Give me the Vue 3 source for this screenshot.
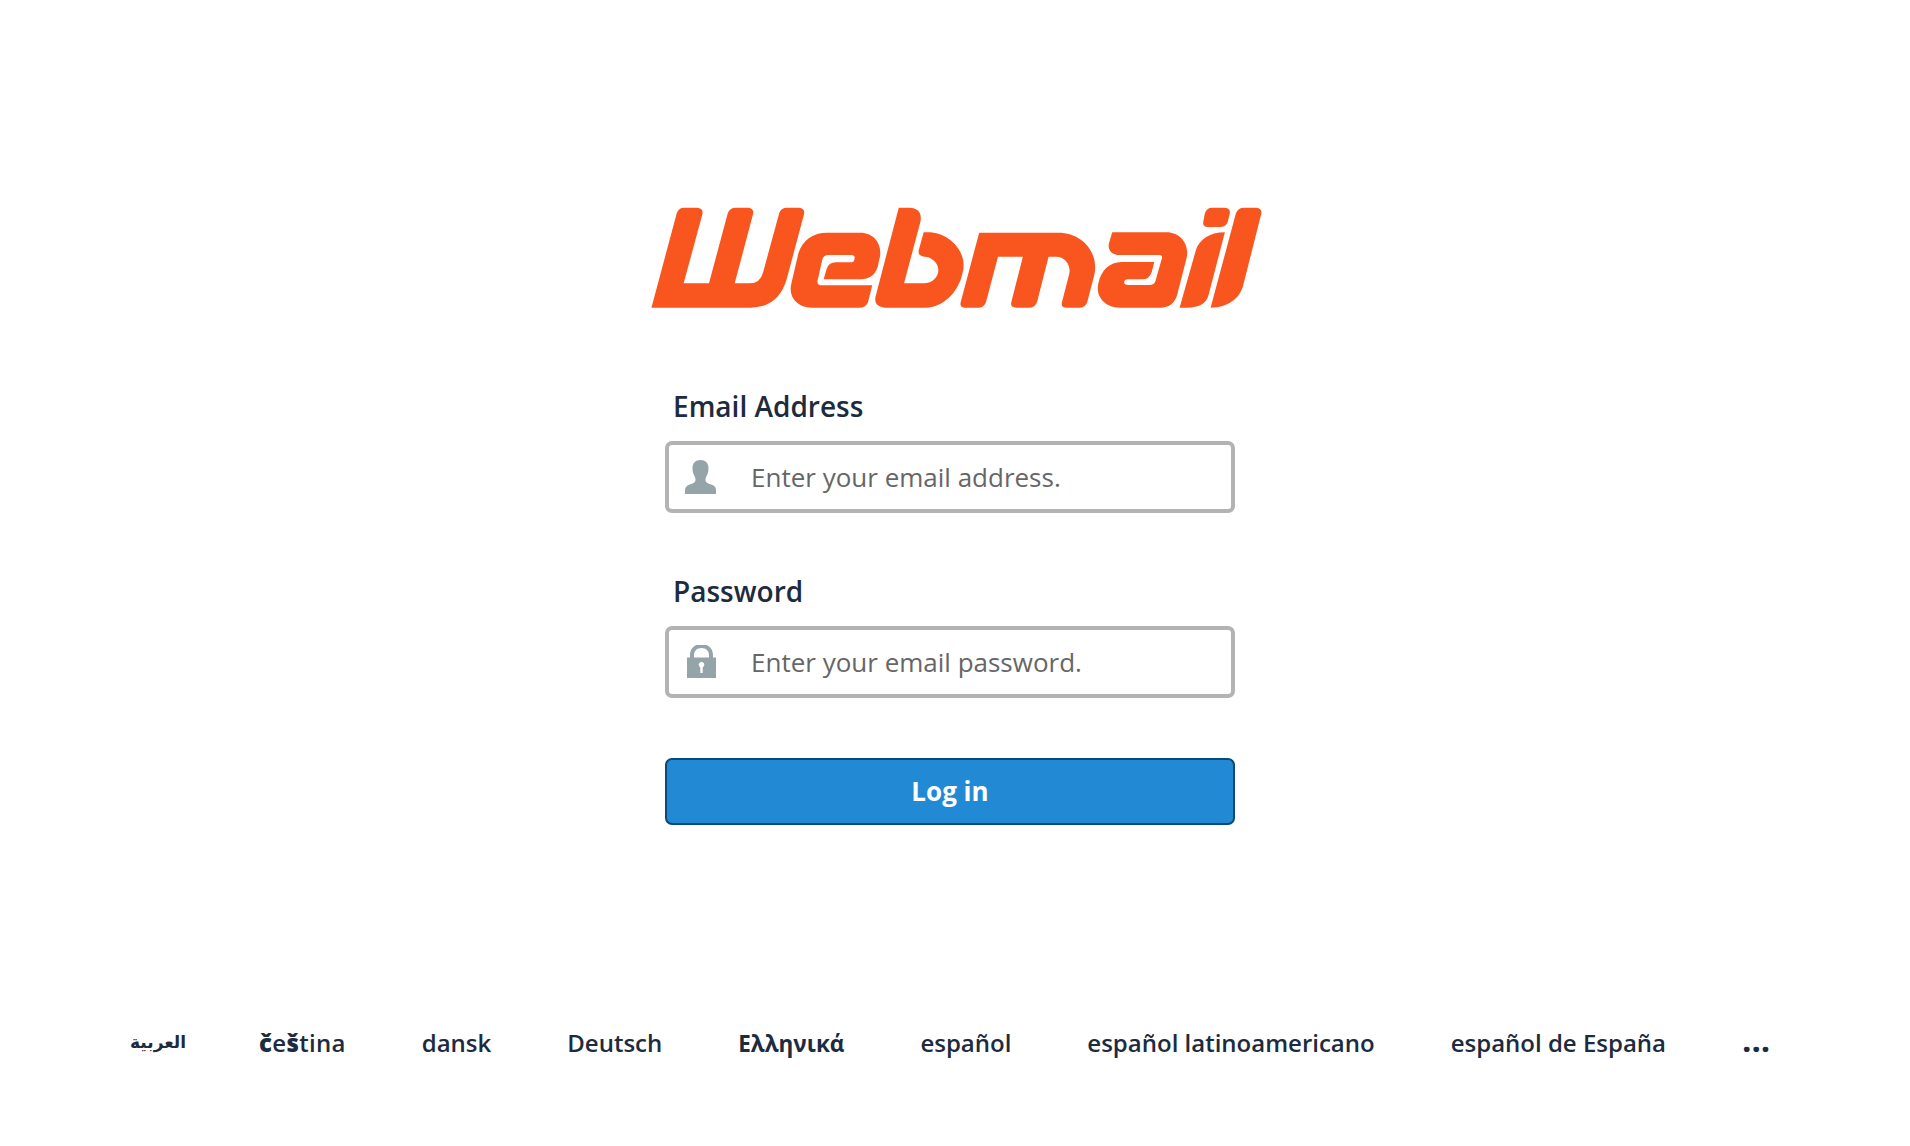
<template>
  <div class="login-page">
    <svg class="logo" viewBox="0 0 1568 390" preserveAspectRatio="none" role="img" aria-label="Webmail">
      <path d="M28 353 L90 70 Q94 53 108 53 L140 53 Q156 55 153 72 L107 280 L169 280 L215 70 Q219 53 235 53 L265 53 Q280 55 277 72 L232 280 L268 280 Q295 280 302 245 L341 70 Q345 53 360 53 L390 53 Q405 55 402 72 L360 265 Q340 353 270 353 Z" />
      <path d="M458 128 L540 128 C575 128 595 165 587 205 L582 232 Q572 268 540 268 L450 268 L457 238 Q462 217 480 217 L518 217 Q524 217 525 210 L526 203 Q526 195 518 195 L462 195 Q450 195 447 207 L435 272 Q433 286 445 286 L569 286 L559 335 Q555 353 535 353 L420 353 C385 353 362 320 371 280 L388 190 C398 150 425 128 458 128 Z" />
      <path d="M634 53 L660 53 Q693 55 687 95 L647 280 L695 280 C720 280 735 255 730 232 C727 215 712 200 697 200 Q680 198 683 180 L695 127 L705 127 C760 127 805 190 790 250 C780 310 740 353 700 353 L600 353 Q572 350 577 320 Z" />
      <path d="M831 128 L1025 128 C1085 128 1125 190 1113 255 L1096 335 Q1092 353 1075 353 L1045 353 Q1030 353 1034 335 L1051 255 C1058 225 1040 200 1020 200 L1001 200 L973 335 Q969 353 952 353 L922 353 Q906 353 910 335 L938 200 L877 200 L848 335 Q844 353 827 353 L797 353 Q782 353 786 335 Z" />
      <path d="M1157 127 L1290 127 C1325 127 1347 165 1339 205 L1316 315 Q1306 353 1275 353 L1175 353 C1140 353 1115 320 1123 280 C1130 240 1150 217 1180 216 L1260 216 L1254 245 Q1248 268 1230 268 L1197 268 Q1186 268 1186 277 Q1186 285 1197 285 L1248 285 Q1260 285 1263 272 L1279 203 Q1280 195 1272 195 L1175 195 C1155 195 1145 178 1149 160 Z" />
      <path d="M1384 70 Q1388 53 1402 53 L1432 53 Q1448 55 1445 70 L1440 95 Q1436 111 1420 111 L1392 111 Q1377 110 1380 95 Z" />
      <path d="M1322 353 L1362 180 C1370 150 1395 127 1433 127 L1393 315 Q1385 353 1340 353 Z" />
      <path d="M1460 70 Q1465 53 1480 53 L1510 53 Q1525 55 1522 72 L1478 285 C1470 325 1440 353 1398 353 Z" />
    </svg>

    <form class="login-form" @submit.prevent>
      <label class="field-label" for="user">Email Address</label>
      <div class="input-box">
        <svg class="input-icon" viewBox="0 0 31 34">
          <path d="M15.5 0 C20.500 0 23.500 3 23.500 8 C23.500 11 23 13 22 15 C21 17 20.500 18.500 20.500 20 C20.500 22.500 23 23.500 26 24.500 C29 25.500 31 27 31 30 L31 34 L0 34 L0 30 C0 27 2 25.500 5 24.500 C8 23.500 10.500 22.500 10.500 20 C10.500 18.500 10 17 9 15 C8 13 7.500 11 7.500 8 C7.500 3 10.500 0 15.500 0 Z" />
        </svg>
        <input id="user" type="text" placeholder="Enter your email address." />
      </div>

      <label class="field-label password-label" for="pass">Password</label>
      <div class="input-box">
        <svg class="input-icon" viewBox="-2 1 31 34">
          <path fill-rule="evenodd" d="M3 13.500 L3 11 C3 4.500 8 0 14.500 0 C21 0 26 4.500 26 11 L26 13.500 L29 13.500 L29 34 L0 34 L0 13.500 Z M7 13.500 L22 13.500 L22 11 C22 6.800 19 4 14.500 4 C10 4 7 6.800 7 11 Z M14.500 18 C12.900 18 11.700 19.200 11.700 20.800 C11.700 21.900 12.400 22.800 13.300 23.300 L13.300 29 L15.700 29 L15.700 23.300 C16.600 22.800 17.300 21.900 17.300 20.800 C17.300 19.200 16.100 18 14.500 18 Z" />
        </svg>
        <input id="pass" type="password" placeholder="Enter your email password." />
      </div>

      <button class="login-btn" type="submit">Log in</button>
    </form>

    <nav class="locales">
      <a v-for="locale in locales" :key="locale.name" :class="locale.cls">
        <template v-if="locale.cls === 'czech'"><b>č</b>e<b>š</b>tina</template>
        <template v-else>{{ locale.name }}</template>
      </a>
    </nav>
  </div>
</template>

<script setup>
const locales = [
  { name: 'العربية', cls: 'arabic' },
  { name: 'čeština', cls: 'czech' },
  { name: 'dansk' },
  { name: 'Deutsch' },
  { name: 'Ελληνικά', cls: 'greek' },
  { name: 'español' },
  { name: 'español latinoamericano' },
  { name: 'español de España' },
  { name: '...', cls: 'more' }
];
</script>

<style>
html, body {
  background: #fff;
}
</style>

<style scoped>
.login-page {
  display: flex;
  flex-direction: column;
  align-items: center;
  padding: 190px 10px 0 0;
  font-family: "Open Sans", "Noto Sans", sans-serif;
  color: #1d2b3e;
}

.logo {
  display: block;
  width: 640px;
  height: 130px;
  margin-left: 20px;
  fill: #f9561f;
}

.login-form {
  display: flex;
  flex-direction: column;
  width: 570px;
  margin-top: 67px;
}

.field-label {
  padding-left: 8px;
  margin-bottom: 16px;
  font-size: 28px;
  font-weight: 600;
  line-height: 38px;
}

.password-label {
  margin-top: 59px;
}

.input-box {
  display: flex;
  align-items: center;
  box-sizing: border-box;
  height: 72px;
  padding-left: 16px;
  border: 4px solid #b3b3b3;
  border-radius: 7px;
}

.input-icon {
  flex: none;
  width: 31px;
  height: 34px;
  fill: #94a4a9;
  filter: blur(0.5px);
}

.input-box input {
  flex: 1;
  min-width: 0;
  height: 100%;
  margin-left: 35px;
  padding: 0;
  border: none;
  outline: none;
  background: transparent;
  font-family: inherit;
  font-size: 26px;
  color: #333;
}

.input-box input::placeholder {
  color: #666;
  opacity: 1;
}

.login-btn {
  height: 67px;
  margin-top: 60px;
  padding-bottom: 2px;
  border: 2px solid #0b4a78;
  border-radius: 7px;
  background: #228ad4;
  color: #fff;
  font-family: inherit;
  font-size: 26px;
  font-weight: 700;
  cursor: pointer;
}

.locales {
  display: flex;
  align-items: baseline;
  gap: 76px;
  align-self: flex-start;
  margin: 195px 0 0 130px;
  font-size: 24px;
  font-weight: 600;
  line-height: 40px;
  white-space: nowrap;
}

.arabic {
  position: relative;
  top: -4px;
  margin-right: -3px;
  font-family: "DejaVu Sans", sans-serif;
  font-size: 17px;
  font-weight: 700;
}

.czech {
  letter-spacing: 0.300px;
}

.greek {
  font-size: 22.500px;
  font-weight: 700;
}

.more {
  font-size: 33px;
  font-weight: 700;
}
</style>
